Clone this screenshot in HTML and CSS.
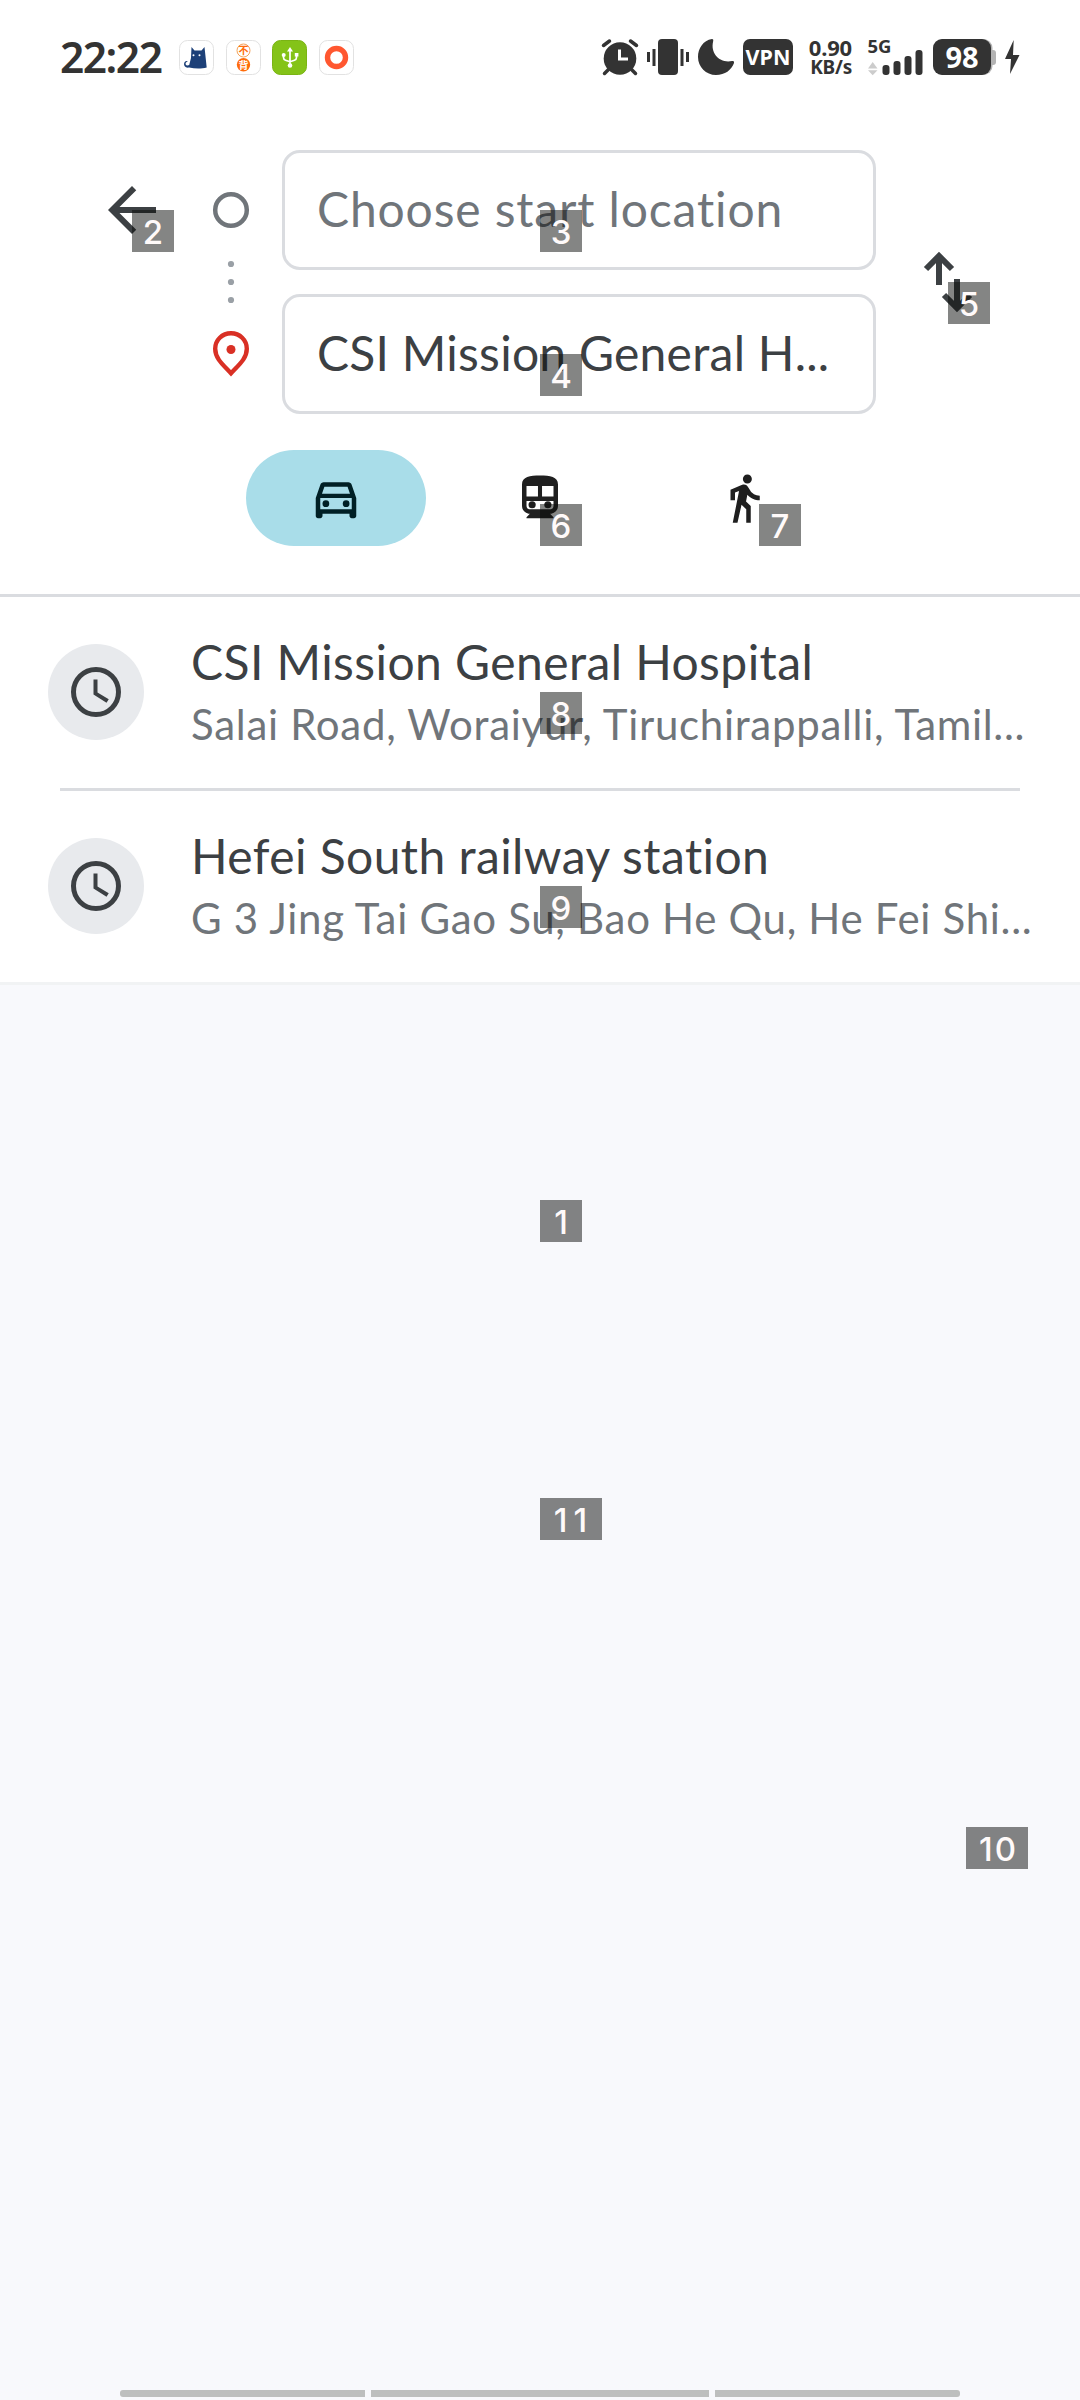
FILE: index.html
```html
<!DOCTYPE html>
<html lang="en">
<head>
<meta charset="utf-8">
<title>Directions</title>
<link rel="stylesheet" href="styles.css">
</head>
<body>
<div class="screen">
  <div class="status">
    <span class="clock">22:22</span>
    <div class="apps">
      <svg class="app" viewBox="0 0 35 35"><rect class="tile" x=".5" y=".5" width="34" height="34" rx="8"/><path fill="#1d4078" d="M12.500 7l3 3.500h7L25.500 7l1.500 14 .7 6.500c-5 1.300-12 1.300-17.500 0-3.500.8-5.800-1.500-5-4.500.5-1.700 2.300-2.500 3.500-1.600-1.700.2-2.500 1.800-2 3 .6 1.300 2 1.300 3.500.6L12 18z"/><circle cx="14.500" cy="15.300" r="1" fill="#fff"/><circle cx="20.500" cy="15.300" r="1" fill="#fff"/></svg>
      <svg class="app" viewBox="0 0 35 35"><rect class="tile" x=".5" y=".5" width="34" height="34" rx="8"/><circle cx="17.500" cy="10.500" r="6.500" fill="none" stroke="#f5a35c"/><circle cx="17.500" cy="24.800" r="6.700" fill="#ff6c0a"/><text class="cjk" x="17.500" y="14.200" fill="#ff6c0a">不</text><text class="cjk" x="17.500" y="28.500" fill="#fff">背</text></svg>
      <svg class="app" viewBox="0 0 35 35"><rect x=".5" y=".5" width="34" height="34" rx="8" fill="#84c318" stroke="#7ab414"/><g fill="none" stroke="#fff" stroke-width="1.700"><path d="M18 25V9M11.500 15v2.500q0 2 2 2.700l4.500 1.500M24.500 15v2.500q0 2-2 2.700L18 21.700"/></g><path fill="#fff" d="M18 7l3 4.500h-6zM22.800 13h3.600v3.600h-3.600z"/><circle cx="11.700" cy="15" r="2" fill="#fff"/><circle cx="18" cy="25.500" r="2.300" fill="#fff"/></svg>
      <svg class="app" viewBox="0 0 35 35"><rect class="tile" x=".5" y=".5" width="34" height="34" rx="8"/><circle cx="17.500" cy="17.500" r="9" fill="none" stroke="#ff5730" stroke-width="5.400"/></svg>
    </div>
    <div class="system">
      <svg class="alarm" viewBox="0 0 38 36"><circle cx="19" cy="19.500" r="16.300" fill="#333"/><path d="M2.500 6.500L8.500 2M35.500 6.500L29.500 2M7.500 30.500l-4 4M30.500 30.500l4 4" stroke="#333" stroke-width="3.500" stroke-linecap="round"/><path d="M18.500 10.500V20H27" fill="none" stroke="#fff" stroke-width="3"/></svg>
      <svg class="vibrate" viewBox="0 0 42 36"><rect x="11" width="20" height="36" rx="4" fill="#333"/><path d="M1.500 13v10M7 10v17M35 10v17M40.500 13v10" stroke="#333" stroke-width="3"/></svg>
      <svg class="moon" viewBox="0 0 36 36"><path fill="#333" d="M14 0C5 1.500 0 9.500 0 18c0 10 8 18 18 18 9 0 15.500-5 18-12 .4-1.700-.8-2.300-2-2C22 24.500 12 15 15.200 2c.3-1.200-.1-2-1.200-2z"/></svg>
      <span class="vpn">VPN</span>
      <div class="speed"><span class="rate">0.90</span><span class="unit">KB/s</span></div>
      <svg class="signal" viewBox="0 0 55 36"><text x="-.5" y="13.500" class="net">5G</text><path fill="#ccc" d="M0 29.500L4.700 23l4.800 6.500zM0 31.200h9.500l-4.800 5z"/><g fill="#333"><rect x="14.500" y="26" width="7" height="10" rx="3"/><rect x="25.500" y="22" width="7" height="14" rx="3"/><rect x="36.500" y="17" width="7" height="19" rx="3"/><rect x="47.500" y="11" width="7" height="25" rx="3"/></g></svg>
      <div class="battery"><span class="level">98</span><i class="nub"></i></div>
      <svg class="bolt" viewBox="0 0 15 34"><path fill="#333" d="M8.700 0L0 19h6l-1 15 9.500-19H8z"/></svg>
    </div>
  </div>

  <header class="header">
    <div class="route">
      <svg class="back" viewBox="0 0 24 24"><path d="M20 11H7.830l5.590-5.590L12 4l-8 8 8 8 1.410-1.410L7.830 13H20z"/></svg>
      <svg class="rail" viewBox="0 0 36 264"><circle cx="18" cy="60" r="15.800" fill="none" stroke="#70757a" stroke-width="4.500"/><g fill="#9aa0a6"><circle cx="18" cy="114" r="3.100"/><circle cx="18" cy="132" r="3.100"/><circle cx="18" cy="150" r="3.100"/></g><path d="M18 183.300c-8.800 0-15.800 6.700-15.800 15.500 0 10.200 8.800 16.700 15.800 24.500 7-7.800 15.800-14.300 15.800-24.500 0-8.800-7-15.500-15.800-15.500z" fill="none" stroke="#d93025" stroke-width="4.400"/><circle cx="18" cy="199.500" r="4.500" fill="#d93025"/></svg>
      <div class="fields">
        <div class="field hint"><span>Choose start location</span></div>
        <div class="field dest"><span>CSI Mission General H...</span></div>
      </div>
      <svg class="swap" viewBox="0 0 48 60"><g fill="none" stroke="#3c4043" stroke-width="6"><path d="M15 33V4.500M2 17L15 4l13 13M33 27v28.500M20 43l13 13 13-13"/></g></svg>
    </div>
    <nav class="modes">
      <div class="mode active"><svg viewBox="0 0 24 24"><path fill="#001f25" fill-rule="evenodd" d="M18.920 6.010C18.720 5.420 18.160 5 17.500 5h-11c-.66 0-1.210.42-1.420 1.010L3 12v8c0 .55.450 1 1 1h1c.55 0 1-.45 1-1v-1h12v1c0 .55.450 1 1 1h1c.55 0 1-.45 1-1v-8zM6.850 7h10.290l1.080 3.110H5.770zM19 17H5v-5h14z"/><circle cx="7.500" cy="14.500" r="1.500" fill="#001f25"/><circle cx="16.500" cy="14.500" r="1.500" fill="#001f25"/></svg></div>
      <div class="mode"><svg viewBox="0 0 24 24"><path fill="#1f1f1f" fill-rule="evenodd" d="M12 2c-4.420 0-8 .5-8 4v9.500C4 17.430 5.570 19 7.500 19L6 20.500v.5h12v-.5L16.500 19c1.930 0 3.500-1.570 3.500-3.500V6c0-3.500-3.580-4-8-4zM6 6.700h5.100v4.600H6zM12.900 6.700H18v4.600h-5.100zM6 13.300h12V15.500c0 .83-.67 1.500-1.500 1.500h-9C6.670 17 6 16.330 6 15.500z"/><circle cx="8.500" cy="15" r="1.600" fill="#1f1f1f"/><circle cx="15.500" cy="15" r="1.600" fill="#1f1f1f"/></svg></div>
      <div class="mode"><svg viewBox="0 0 24 24"><path fill="#1f1f1f" d="M13.500 5.500c1.100 0 2-.9 2-2s-.9-2-2-2-2 .9-2 2 .9 2 2 2zM9.800 8.900L7 23h2.100l1.800-8 2.100 2v6h2v-7.500l-2.100-2 .6-3C14.800 12 16.800 13 19 13v-2c-1.900 0-3.500-1-4.300-2.400l-1-1.600c-.4-.6-1-1-1.700-1-.3 0-.5.1-.8.1L6 8.300V13h2V9.600z"/></svg></div>
    </nav>
  </header>

  <main class="results">
    <div class="result">
      <div class="avatar"><svg viewBox="0 0 24 24"><circle cx="12" cy="12" r="9"/><path d="M11 7h1.600v5.200l4.500 2.700-.9 1.400L11 13z"/></svg></div>
      <div class="place"><div class="title">CSI Mission General Hospital</div><div class="address">Salai Road, Woraiyur, Tiruchirappalli, Tamil...</div></div>
    </div>
    <div class="divider"></div>
    <div class="result">
      <div class="avatar"><svg viewBox="0 0 24 24"><circle cx="12" cy="12" r="9"/><path d="M11 7h1.600v5.200l4.500 2.700-.9 1.400L11 13z"/></svg></div>
      <div class="place"><div class="title">Hefei South railway station</div><div class="address">G 3 Jing Tai Gao Su, Bao He Qu, He Fei Shi...</div></div>
    </div>
  </main>

  <footer class="navbar"><i></i><i></i><i></i></footer>

  <span class="tag n1">1</span><span class="tag n2">2</span><span class="tag n3">3</span><span class="tag n4">4</span><span class="tag n5">5</span><span class="tag n6">6</span><span class="tag n7">7</span><span class="tag n8">8</span><span class="tag n9">9</span><span class="tag wide n10">10</span><span class="tag wide n11">11</span>
</div>
</body>
</html>
```
FILE: styles.css
```css
* { box-sizing: border-box; }
body { margin: 0; font-family: Lato, "Open Sans", sans-serif; color: #3c4043; }
svg { display: block; flex: none; overflow: visible; }
.screen { position: relative; width: 1080px; height: 2400px; display: flex; flex-direction: column; background: #f8f9fc; overflow: hidden; }

.status { height: 114px; padding: 0 60px 0 60px; display: flex; align-items: center; background: #fff; color: #333; font-family: "Noto Sans", sans-serif; }
.clock { width: 119px; font-size: 42.500px; font-weight: 600; line-height: 60px; white-space: nowrap; letter-spacing: -1.500px; }
.apps { display: flex; gap: 11.700px; }
.app { width: 35px; height: 35px; }
.tile { fill: #fff; stroke: #e2e2e2; }
.cjk { font: 700 10px "Noto Sans CJK SC", sans-serif; text-anchor: middle; }
.system { margin-left: auto; display: flex; align-items: center; height: 36px; }
.alarm { width: 38px; height: 36px; margin-right: 8px; }
.vibrate { width: 42px; height: 36px; margin-right: 9px; }
.moon { width: 36px; height: 36px; margin-right: 9px; }
.vpn { width: 50px; height: 36px; margin-right: 14px; border-radius: 7px; background: #333; color: #fff; font-size: 21.500px; font-weight: 700; line-height: 36px; text-align: center; }
.speed { width: 45px; height: 36px; margin-right: 16px; display: flex; flex-direction: column; align-items: flex-end; font-weight: 700; white-space: nowrap; }
.rate { font-size: 22px; line-height: 16px; letter-spacing: -.2px; }
.unit { font-size: 19px; line-height: 22px; padding-top: 1px; letter-spacing: -.2px; }
.signal { width: 55px; height: 36px; margin-right: 10px; }
.net { font: 700 18.500px "Noto Sans", sans-serif; fill: #333; }
.battery { width: 63px; height: 36px; margin-right: 9px; display: flex; align-items: center; }
.level { width: 58px; height: 36px; border-radius: 9px; background: #333; color: #fff; font-size: 29px; font-weight: 700; line-height: 36px; text-align: center; box-shadow: 1.500px 0 #b3b3b3; }
.nub { width: 4px; height: 15px; margin-left: 1px; background: #b3b3b3; border-radius: 0 3px 3px 0; }
.bolt { width: 15px; height: 34px; }

.header { height: 483px; padding-top: 36px; background: #fff; border-bottom: 3px solid #dadce0; }
.route { display: flex; align-items: flex-start; padding-left: 96px; }
.back { width: 72px; height: 72px; margin-top: 24px; fill: #3c4043; }
.rail { width: 36px; height: 264px; margin: 0 33px 0 45px; }
.fields { width: 594px; display: flex; flex-direction: column; gap: 24px; }
.field { height: 120px; padding: 0 32px 3px; border: 3px solid #dadce0; border-radius: 18px; display: flex; align-items: center; font-size: 48px; white-space: nowrap; line-height: 60px; }
.hint { color: #70757a; letter-spacing: .850px; }
.dest { letter-spacing: .250px; }
.swap { width: 48px; height: 60px; margin: 102px 0 0 48px; }
.modes { display: flex; gap: 24px; padding: 36px 0 0 246px; }
.mode { width: 180px; height: 96px; border-radius: 48px; display: flex; align-items: center; justify-content: center; }
.mode svg { width: 54px; height: 54px; }
.active { background: #a9dde9; }

.results { background: #fff; border-bottom: 3px solid #f1f3f4; }
.result { height: 191px; padding: 0 0 1px 48px; display: flex; align-items: center; }
.avatar { width: 96px; height: 96px; border-radius: 50%; background: #e8eaed; display: flex; align-items: center; justify-content: center; }
.avatar svg { width: 60px; height: 60px; fill: #3c4043; }
.avatar circle { fill: none; stroke: #3c4043; stroke-width: 2; }
.place { margin-left: 47px; padding-bottom: 1px; white-space: nowrap; }
.title { font-size: 48px; line-height: 64px; letter-spacing: .420px; }
.address { font-size: 42px; line-height: 60px; letter-spacing: .700px; color: #70757a; }
.divider { height: 3px; margin: 0 60px; background: #dadce0; }

.navbar { margin-top: auto; padding: 0 120px 3px; display: flex; gap: 6px; }
.navbar i { height: 7px; flex: 245; background: #bdbfbe; }
.navbar i:nth-child(2) { flex: 338; }
.navbar i:first-child { border-radius: 3px 0 0 3px; }
.navbar i:last-child { border-radius: 0 3px 3px 0; }

.tag { position: absolute; width: 42px; height: 42px; background: rgba(10, 12, 10, .5); color: #fffafa; font: 500 33px/44px Inter, sans-serif; text-align: center; }
.wide { width: 62px; padding-left: 3px; letter-spacing: 2px; }
.n1 { left: 540px; top: 1200px; }
.n2 { left: 132px; top: 210px; }
.n3 { left: 540px; top: 210px; }
.n4 { left: 540px; top: 354px; }
.n5 { left: 948px; top: 282px; }
.n6 { left: 540px; top: 504px; }
.n7 { left: 759px; top: 504px; }
.n8 { left: 540px; top: 692px; }
.n9 { left: 540px; top: 886px; }
.n10 { left: 966px; top: 1827px; }
.n11 { left: 540px; top: 1498px; letter-spacing: 6px; padding-left: 5px; }
```
